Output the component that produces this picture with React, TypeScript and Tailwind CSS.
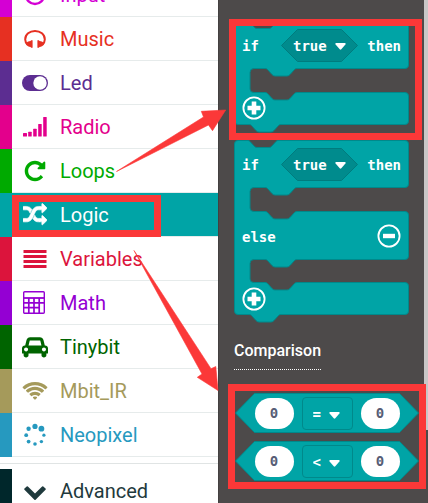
import { ReactNode } from "react";

const ShuffleIcon = () => (
  <svg viewBox="0 0 1792 1792" className="w-6 h-6" fill="currentColor" stroke="currentColor" strokeWidth="50" aria-hidden="true">
    <path d="M666 481q-60 92-137 273-22-45-37-72.5t-40.5-63.5-51-56.5-63-35-81.5-14.5h-224q-14 0-23-9t-9-23v-192q0-14 9-23t23-9h224q250 0 410 225zm1126 799q0 14-9 23l-320 320q-9 9-23 9-13 0-22.5-9.5t-9.5-22.5v-192q-32 0-85 .5t-81 1-73-1-71-5-64-10.5-63-18.5-58-28.5-59-40-55-53.5-56-69.5q59-93 136-273 22 45 37 72.5t40.5 63.5 51 56.5 63 35 81.5 14.5h256v-192q0-14 9-23t23-9q12 0 24 10l319 319q9 9 9 23zm0-896q0 14-9 23l-320 320q-9 9-23 9-13 0-22.5-9.5t-9.5-22.5v-192h-256q-48 0-87 15t-69 45-51 61.5-45 77.5q-32 62-78 171-29 66-49.5 111t-54 105-64 100-74 83-90 68.5-106.5 42-128 16.5h-224q-14 0-23-9t-9-23v-192q0-14 9-23t23-9h224q48 0 87-15t69-45 51-61.5 45-77.5q32-62 78-171 29-66 49.5-111t54-105 64-100 74-83 90-68.5 106.5-42 128-16.5h256v-192q0-14 9-23t23-9q12 0 24 10l319 319q9 9 9 23z" />
  </svg>
);

const RepeatIcon = () => (
  <svg viewBox="0 0 1792 1792" className="w-6 h-6" fill="currentColor" aria-hidden="true">
    <path d="M1664 256v448q0 26-19 45t-45 19h-448q-42 0-59-40-17-39 14-69l138-138q-148-137-349-137-104 0-198.5 40.5t-163.5 109.5-109.5 163.5-40.5 198.5 40.5 198.5 109.5 163.5 163.5 109.5 198.5 40.5q119 0 225-52t179-147q7-10 23-12 15 0 25 9l137 138q9 8 9.5 20.5t-7.5 22.5q-109 132-264 204.5t-327 72.5q-156 0-298-61t-245-164-164-245-61-298 61-298 164-245 245-164 298-61q147 0 284.5 55.5t244.5 156.5l130-129q29-31 70-14 39 17 39 59z" />
  </svg>
);

const WifiIcon = () => (
  <svg viewBox="-40 0 2048 1792" className="w-[26px] h-6" fill="currentColor" aria-hidden="true">
    <path d="M984 1579q-20 0-93-73.5t-73-93.5q0-32 62.5-54t103.5-22 103.5 22 62.5 54q0 20-73 93.5t-93 73.5zm270-271q-2 0-40-25t-101.5-50-128.5-25-128.5 25-101 50-40.5 25q-18 0-93.5-75t-75.5-93q0-13 10-23 78-77 196-121t233-44 233 44 196 121q10 10 10 23 0 18-75.5 93t-93.5 75zm273-272q-11 0-23-8-136-105-252-154.5t-268-49.5q-85 0-170.5 22t-149 53-113.5 62-79 53-31 22q-17 0-92-75t-75-93q0-12 10-22 132-132 320-205t380-73 380 73 320 205q10 10 10 22 0 18-75 93t-92 75zm271-271q-11 0-22-9-179-157-371.5-236.5t-420.5-79.5-420.5 79.5-371.5 236.5q-11 9-22 9-17 0-92.5-75t-75.5-93q0-13 10-23 187-186 445-288t527-102 527 102 445 288q10 10 10 23 0 18-75.5 93t-92.5 75z" />
  </svg>
);

const CarIcon = () => (
  <svg viewBox="0 0 2048 1792" className="w-[26px] h-6" fill="currentColor" aria-hidden="true">
    <path d="M480 1088q0-66-47-113t-113-47-113 47-47 113 47 113 113 47 113-47 47-113zm36-320h1016l-89-357q-2-8-14-17.5t-21-9.5h-768q-9 0-21 9.5t-14 17.5zm1372 320q0-66-47-113t-113-47-113 47-47 113 47 113 113 47 113-47 47-113zm160-96v384q0 14-9 23t-23 9h-96v128q0 80-56 136t-136 56-136-56-56-136v-128h-1024v128q0 80-56 136t-136 56-136-56-56-136v-128h-96q-14 0-23-9t-9-23v-384q0-93 65.5-158.5t158.5-65.5h28l105-419q23-94 104-157.5t179-63.5h768q98 0 179 63.5t104 157.5l105 419h28q93 0 158.5 65.5t65.5 158.5z" />
  </svg>
);

const ChevronIcon = () => (
  <svg viewBox="0 0 1792 1792" className="w-6 h-6" fill="currentColor" aria-hidden="true">
    <path d="M1683 808l-742 741q-19 19-45 19t-45-19l-742-741q-19-19-19-45.5t19-45.5l166-165q19-19 45-19t45 19l531 531 531-531q19-19 45-19t45 19l166 165q19 19 19 45.5t-19 45.5z" />
  </svg>
);

const HeadphonesIcon = () => (
  <svg viewBox="0 0 24 24" className="w-6 h-6" fill="currentColor" aria-hidden="true">
    <path d="M4.6 17.4C2.8 15.8 2.2 14.4 2.2 12.4 2.2 7.400 6.600 4 12 4s9.800 3.400 9.800 8.400c0 2-.6 3.400-2.400 5" fill="none" stroke="currentColor" strokeWidth="2" />
    <path d="M7.800 13.200h1.800v7.600H7.800V20c-2.600-.2-4.200-1.300-5.200-3.200 1-1.600 2.800-2.600 5.200-2.800zM16.200 13.200h-1.800v7.600h1.800V20c2.600-.2 4.200-1.300 5.200-3.200-1-1.600-2.800-2.600-5.200-2.800z" />
  </svg>
);

const ToggleIcon = () => (
  <svg viewBox="0 0 26 16" className="w-[26px] h-4" aria-hidden="true">
    <rect width="26" height="16" rx="8" fill="currentColor" />
    <circle cx="18" cy="8" r="6.7" fill="white" />
  </svg>
);

const SignalIcon = () => (
  <svg viewBox="0 0 24 20" className="w-6 h-5" fill="currentColor" aria-hidden="true">
    <rect x="0" y="16" width="4" height="3.5" rx=".5" />
    <rect x="5.2" y="14.7" width="3.5" height="4.8" rx=".5" />
    <rect x="10.2" y="11.7" width="3.5" height="7.8" rx=".5" />
    <rect x="15.2" y="7" width="3.5" height="12.5" rx=".5" />
    <rect x="20.2" y="0" width="3.5" height="19.5" rx=".5" />
  </svg>
);

const BarsIcon = () => (
  <svg viewBox="0 0 24 18" className="w-6 h-[18px]" fill="currentColor" aria-hidden="true">
    <path d="M.5 0h23v3H.5zM.5 5h23v3H.5zM.5 10h23v3H.5zM.5 15h23v3H.5z" />
  </svg>
);

const CalculatorIcon = () => (
  <svg viewBox="0 0 22 23" className="mr-[2px] w-[22px] h-[23px]" fill="none" stroke="currentColor" aria-hidden="true">
    <rect x=".7" y=".7" width="20.600" height="21.600" rx="1" strokeWidth="1.400" />
    <path d="M1 7h20" strokeWidth="1.800" />
    <path d="M1 11.800h20M1 16.700h15.500M5.800 7v15M11 7v15M16.200 7v15" strokeWidth="1.700" />
  </svg>
);

const SpinnerIcon = () => (
  <svg viewBox="0 0 24 24" className="w-6 h-6" fill="currentColor" aria-hidden="true">
    <circle cx="12" cy="3.4" r="2.6" />
    <circle cx="18.4" cy="5.7" r="2.9" />
    <circle cx="5.6" cy="5.8" r="2.2" />
    <circle cx="3.2" cy="12.2" r="1.9" />
    <circle cx="5.6" cy="18.6" r="1.9" />
    <circle cx="12" cy="21" r="1.8" />
    <circle cx="18.4" cy="18.6" r="1.7" />
    <circle cx="20.9" cy="12.2" r="1.6" />
  </svg>
);

const TargetIcon = () => (
  <svg viewBox="0 0 24 24" className="w-6 h-6" fill="none" stroke="currentColor" strokeWidth="2.4" aria-hidden="true">
    <circle cx="12" cy="12" r="9" />
    <circle cx="12" cy="12" r="3" fill="currentColor" />
  </svg>
);

const categories = [
  { name: "Input", icon: <TargetIcon />, text: "text-[#d400d4]", strip: "bg-[#d400d4]" },
  { name: "Music", icon: <HeadphonesIcon />, text: "text-[#e63022]", strip: "bg-[#e63022]" },
  { name: "Led", icon: <ToggleIcon />, text: "text-[#5c2d91]", strip: "bg-[#5c2d91]" },
  { name: "Radio", icon: <SignalIcon />, text: "text-[#e3008c]", strip: "bg-[#e3008c]" },
  { name: "Loops", icon: <RepeatIcon />, text: "text-[#00aa00]", strip: "bg-[#00aa00]" },
  { name: "Logic", icon: <ShuffleIcon />, text: "text-white", strip: "bg-[#00a4a6]", active: true },
  { name: "Variables", icon: <BarsIcon />, text: "text-[#dc143c]", strip: "bg-[#dc143c]" },
  { name: "Math", icon: <CalculatorIcon />, text: "text-[#9400d3]", strip: "bg-[#9400d3]" },
  { name: "Tinybit", icon: <CarIcon />, text: "text-[#006400]", strip: "bg-[#006400]" },
  { name: "Mbit_IR", icon: <WifiIcon />, text: "text-[#a59a5b]", strip: "bg-[#a59a5b]" },
  { name: "Neopixel", icon: <SpinnerIcon />, text: "text-[#2699bf]", strip: "bg-[#2699bf]" },
];

type CategoryProps = {
  name: string;
  icon: ReactNode;
  text: string;
  strip: string;
  active?: boolean;
};

function Category({ name, icon, text, strip, active }: CategoryProps) {
  return (
    <button type="button" className="flex h-11 w-full text-left">
      <span className={`w-3 shrink-0 self-stretch ${strip}`} />
      <span
        className={`flex flex-1 items-center self-stretch border-b border-[#e6ebeb] pl-2 ${text} ${active ? "bg-[#00a4a6]" : "bg-white"}`}
      >
        <span className="flex w-[30px] justify-center">{icon}</span>
        <span className="pl-[10px] text-xl">{name}</span>
      </span>
    </button>
  );
}

const Caret = () => (
  <svg viewBox="0 0 11 7" className="pointer-events-none absolute right-3 top-[14px] w-[11px] h-[7px]" fill="white" aria-hidden="true">
    <path d="M1.200 0h8.600q1.400.4.600 1.600L6.300 6.300q-.8.800-1.600 0L.6 1.600Q-.2.400 1.200 0z" />
  </svg>
);

const PlusIcon = () => (
  <svg viewBox="0 0 24 24" className="w-6 h-6" fill="none" stroke="white" aria-hidden="true">
    <circle cx="12" cy="12" r="10.6" strokeWidth="1.8" />
    <path d="M12 5.500v13M5.500 12h13" strokeWidth="4.600" />
  </svg>
);

const MinusIcon = () => (
  <svg viewBox="0 0 24 24" className="w-6 h-6" fill="none" stroke="white" aria-hidden="true">
    <circle cx="12" cy="12" r="10.6" strokeWidth="1.8" />
    <path d="M6 12h12" strokeWidth="4.400" />
  </svg>
);

function Condition() {
  return (
    <label className="relative flex h-[33px] w-[77px] items-center">
      <svg viewBox="0 0 77 33" className="absolute inset-0 h-full w-full" aria-hidden="true">
        <path d="M16.500.5h44l16 16-16 16h-44L.5 16.500z" fill="#008b8d" stroke="#007c7e" />
      </svg>
      <select aria-label="Condition" className="relative w-full appearance-none bg-transparent pl-3 pt-[2px] outline-none">
        <option>true</option>
        <option>false</option>
      </select>
      <Caret />
    </label>
  );
}

function IfRow() {
  return (
    <div className="flex h-12 items-center px-2">
      <span className="w-[39px] pt-[2px]">if</span>
      <Condition />
      <span className="ml-auto pt-[2px]">then</span>
    </div>
  );
}

// Shared outline: top edge, "if" row and the first statement slot
const IF_PATH =
  "M4 .5H14q1 0 2 1l4 4.500q1.500 1.500 3 1.500H35q1.500 0 3-1.500l4-4.500q1-1 2-1H171q3.500 0 3.500 3.500V44q0 3.500-3.500 3.500H63q-1.500 0-2.500 1l-4.500 5q-1.500 1.500-3 1.500H41q-1.500 0-3-1.500l-4.500-5q-1-1-2.500-1H20q-4 0-4 4V68q0 3.500 4 3.500H31q1.500 0 2.500 1l4.500 5q1.500 1.500 3 1.500H53q1.500 0 3-1.500l4.500-5q1-1 2.500-1H171q3.500 0 3.500 3.500";
const ELSE_PATH =
  "V116q0 3.500-3.500 3.500H63q-1.500 0-2.500 1l-4.500 5q-1.500 1.500-3 1.500H41q-1.500 0-3-1.500l-4.500-5q-1-1-2.500-1H20q-4 0-4 4V139q0 3.500 4 3.500H31q1.500 0 2.500 1l4.500 5q1.500 1.500 3 1.500H53q1.500 0 3-1.500l4.500-5q1-1 2.500-1H171q3.500 0 3.500 3.500";
const END_PATH =
  "q0 3.500-3.500 3.500H47q-1.500 0-2.500 1l-4.500 5q-1.500 1.500-3 1.500H25q-1.500 0-3-1.500l-4.500-5q-1-1-2.500-1H4q-3.500 0-3.500-3.500V4Q.5.5 4 .5z";

function IfBlock() {
  return (
    <div className="relative h-[103px] w-[175px]">
      <svg viewBox="0 0 175 112" className="absolute left-0 top-0 w-full" aria-hidden="true">
        <path d={`${IF_PATH}V100${END_PATH}`} fill="#00a4a6" stroke="#00898b" />
      </svg>
      <div className="relative">
        <IfRow />
        <button type="button" aria-label="Add else" className="ml-2 mt-[27px] block">
          <PlusIcon />
        </button>
      </div>
    </div>
  );
}

function IfElseBlock() {
  return (
    <div className="relative h-[174px] w-[175px]">
      <svg viewBox="0 0 175 183" className="absolute left-0 top-0 w-full" aria-hidden="true">
        <path d={`${IF_PATH}${ELSE_PATH}V171${END_PATH}`} fill="#00a4a6" stroke="#00898b" />
      </svg>
      <div className="relative">
        <IfRow />
        <div className="mt-6 flex h-12 items-center justify-between px-2">
          <span className="pt-[2px]">else</span>
          <button type="button" aria-label="Remove else">
            <MinusIcon />
          </button>
        </div>
        <button type="button" aria-label="Add else if" className="ml-2 mt-[27px] block">
          <PlusIcon />
        </button>
      </div>
    </div>
  );
}

const NumberField = ({ label }: { label: string }) => (
  <input
    aria-label={label}
    defaultValue="0"
    className="relative h-[31px] w-[39px] rounded-full bg-white text-center text-[#575e75] outline-none"
  />
);

function CompareBlock({ operator }: { operator: string }) {
  return (
    <div className="relative flex h-10 w-[184px] items-center justify-center gap-2">
      <svg viewBox="0 0 184 40" className="absolute inset-0 h-full w-full" aria-hidden="true">
        <path d="M19.500.5h145l19 19.500-19 19.500h-145L.5 20z" fill="#00a4a6" stroke="#00898b" />
      </svg>
      <NumberField label="Left value" />
      <label className="relative flex h-[33px] w-[51px] items-center rounded border border-[#00898b]">
        <select aria-label="Operator" defaultValue={operator} className="w-full appearance-none bg-transparent pl-[10px] pt-[2px] outline-none">
          <option>=</option>
          <option>≠</option>
          <option>&lt;</option>
          <option>&gt;</option>
        </select>
        <Caret />
      </label>
      <NumberField label="Right value" />
    </div>
  );
}

export default function App() {
  return (
    <div className="relative flex h-screen overflow-hidden bg-[#4d4a4a] font-[Roboto,sans-serif]">
      <nav className="w-[218px] shrink-0 bg-white">
        <div className="-mt-[27px] border-b border-[#e0e4e4] pb-[6px]">
          {categories.map((category) => (
            <Category key={category.name} {...category} />
          ))}
        </div>
        <div className="pt-[5px]">
          <Category name="Advanced" icon={<ChevronIcon />} text="text-[#1f3a3d]" strip="bg-[#00272b]" />
        </div>
      </nav>

      <main className="flex-1 border-l border-[#434040] pl-[15px] pt-[21px] font-['DejaVu_Sans_Mono',monospace] text-sm font-bold text-white">
        <div className="flex flex-col gap-4">
          <IfBlock />
          <IfElseBlock />
        </div>
        <h2 className="mt-[25px] w-fit border-b border-dotted border-white pb-[6px] font-[Roboto,sans-serif] text-base font-medium">
          Comparison
        </h2>
        <div className="mt-[23px] ml-px flex flex-col gap-2">
          <CompareBlock operator="=" />
          <CompareBlock operator="<" />
        </div>
      </main>
      <div className="h-[430px] w-1 shrink-0 bg-[#c9c7c7]" />

      {/* Callouts */}
      <div className="pointer-events-none absolute left-3 top-[195px] h-[42px] w-[149px] border-[7px] border-[#fb3838]" />
      <div className="pointer-events-none absolute left-[229px] top-[19px] h-[121px] w-[193px] border-[7px] border-[#fb3838]" />
      <div className="pointer-events-none absolute left-[228px] top-[384px] h-[105px] w-[198px] border-[7px] border-[#fb3838]" />
      <svg viewBox="0 0 428 503" className="pointer-events-none absolute left-0 top-0 h-[503px] w-[428px]" fill="#fb3838" stroke="#fb3838" strokeWidth=".6" aria-hidden="true">
        <path d="M116.500 171.500L203.500 117 201.300 111.300 225.700 110 212.500 130.700 208.500 125z" />
        <path d="M134 250.500L211 368.700 215.800 366.500 218 390.500 197.300 377.300 202 374z" />
      </svg>
    </div>
  );
}
